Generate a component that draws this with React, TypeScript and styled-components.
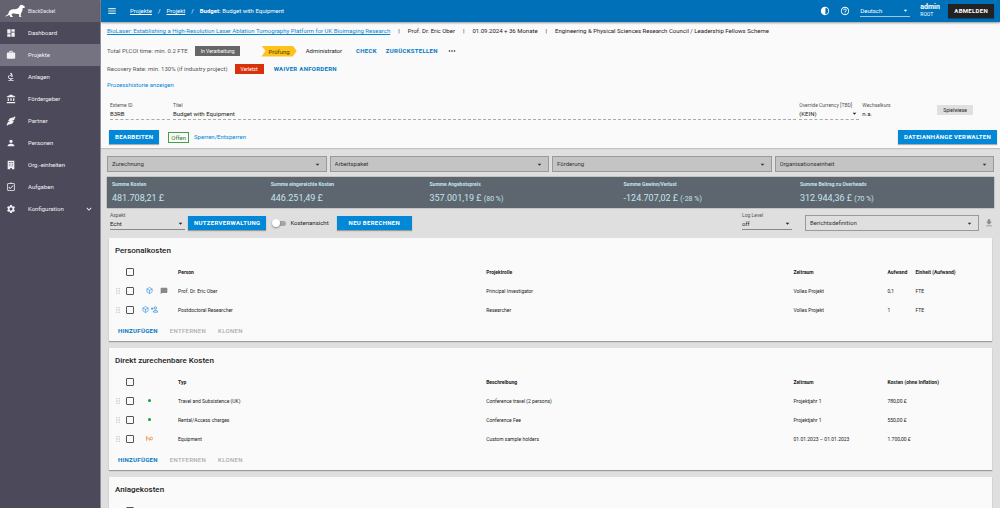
import React from "react";
import styled, { createGlobalStyle } from "styled-components";
import {
  MdDashboard, MdWork, MdBiotech, MdAccountBalance, MdPerson, MdSettings,
  MdReorder, MdContrast, MdHelpOutline, MdMoreHoriz, MdArrowDropDown, MdKeyboardArrowDown,
  MdChatBubble, MdDownload, MdOutlineAssignmentTurnedIn,
} from "react-icons/md";
import { LuBox } from "react-icons/lu";

const blue = "#0288d7";

const Global = createGlobalStyle`
  *, *::before, *::after { box-sizing: border-box; }
  body { margin: 0; font-family: Roboto, "Liberation Sans", sans-serif; font-size: 6px; line-height: 10px; color: #222; background: #dfdfdf; }
  button, input, select { font: inherit; color: inherit; margin: 0; }
  a { color: ${blue}; text-decoration: none; }
  svg { display: block; flex: none; }
`;

const Shell = styled.div`display: flex; height: 100vh; overflow: hidden;`;

const Sidebar = styled.aside`flex: none; width: 101px; background: #4c495a; color: #eeedf1; border-right: 1px solid #8f8c99;`;
const Brand = styled.div`
  display: flex; align-items: center; gap: 2px; height: 22px; padding-left: 4px;
  background: #64626f; font-size: 5px;
`;
const NavItem = styled.a<{ $active?: boolean }>`
  display: flex; align-items: center; height: 22px; padding: 0 6px; color: #f1f0f4;
  background: ${(p) => (p.$active ? "#757281" : "transparent")};
  svg { width: 10px; height: 10px; }
  span { flex: 1; padding-left: 12px; }
`;

const Main = styled.main`flex: 1; min-width: 0; display: flex; flex-direction: column;`;
const TopBar = styled.header`
  position: relative; display: flex; align-items: center; flex: none; height: 22px; padding: 0 6px;
  background: #0070b9; color: #fff; box-shadow: 0 1px 2px rgba(0, 0, 0, 0.4);
`;
const IconButton = styled.button<{ $color?: string }>`
  display: flex; align-items: center; justify-content: center; padding: 0; border: 0; background: none;
  color: ${(p) => p.$color ?? "inherit"};
  svg { width: 10px; height: 10px; }
`;
const Crumbs = styled.nav`
  display: flex; gap: 6px; flex: 1; margin-left: 13px;
  a { color: #fff; text-decoration: underline; }
`;
const TopActions = styled.div`display: flex; align-items: center; gap: 10px;`;
const User = styled.div`font-size: 5px; line-height: 7px; width: 18px; strong { display: block; font-size: 7px; }`;
const Language = styled.div`width: 50px; height: 12px; padding-top: 1px; border-bottom: 1px solid #9cc8e6;`;

const Button = styled.button<{ $dark?: boolean; $wide?: boolean }>`
  height: 14px; padding: 0 ${(p) => (p.$wide ? 12 : 6)}px; border: 0; white-space: nowrap; flex: none;
  background: ${(p) => (p.$dark ? "#222" : blue)};
  color: #fff; font-size: 6px; font-weight: 700; letter-spacing: 0.05em; text-transform: uppercase;
  box-shadow: 0 1px 1px rgba(0, 0, 0, 0.3);
`;
const TextButton = styled.button`
  padding: 0; border: 0; background: none; color: #0078c4; font-size: 6px; font-weight: 700;
  letter-spacing: 0.05em; text-transform: uppercase; white-space: nowrap;
  &:disabled { color: #aaa; font-weight: 500; }
`;

const Scroll = styled.div`flex: 1; min-height: 0; overflow: auto; scrollbar-width: none;`;
const Info = styled.section`background: #fafafa; padding: 4px 3px 4px 6px; box-shadow: 0 1px 1px rgba(0, 0, 0, 0.12);`;
const ProjectLine = styled.div`
  display: flex; gap: 8px; height: 16px; white-space: nowrap;
  a { text-decoration: underline; }
`;
const StatusLine = styled.div`display: flex; align-items: center; height: 18px; color: #555;`;
const Chip = styled.span<{ $bg: string }>`
  margin: 0 10px 0 7px; padding: 0 6px; height: 10px; color: #fff; background: ${(p) => p.$bg}; font-size: 5px; line-height: 10px;
`;
const Stage = styled.span`
  margin-left: 11px; padding: 0 7px; height: 11px; line-height: 11px; color: #4d3a00; background: #ffc21a;
  clip-path: polygon(0 0, calc(100% - 4px) 0, 100% 50%, calc(100% - 4px) 100%, 0 100%, 4px 50%);
`;
const Actor = styled.span`margin: 0 14px 0 9px; color: #222;`;
const StatusActions = styled.div`display: flex; align-items: center; gap: 9px; color: #222;`;
const History = styled.div`height: 16px; padding-top: 2px;`;

const Fields = styled.div`display: flex; gap: 3px; padding: 7px 3px 0; height: 26px;`;
const FieldBox = styled.div<{ $width?: string; $line?: string }>`
  flex: ${(p) => (p.$width ? `0 0 ${p.$width}` : "1 1 0")}; min-width: 0;
  height: 19px; border-bottom: 1px ${(p) => p.$line ?? "dashed #aaa"};
  label, small { display: block; font-size: 5px; line-height: 8px; color: #555; white-space: nowrap; }
  input { display: block; width: 100%; height: 9px; padding: 0; border: 0; background: none; outline: 0; }
`;
const SelectWrap = styled.div`
  display: grid; align-items: center; grid-template-columns: 1fr 9px;
  select { grid-area: 1 / 1 / 2 / 3; appearance: none; width: 100%; height: 9px; padding: 0; border: 0; background: none; outline: 0; }
  select option { color: #222; }
  svg { grid-area: 1 / 2; width: 9px; height: 9px; pointer-events: none; }
`;
const Playground = styled.span`
  align-self: flex-start; margin: 4px 21px 0 auto; padding: 0 6px; height: 10px; background: #e0e0e0; font-size: 5px;
`;
const ActionRow = styled.div`display: flex; align-items: center; justify-content: space-between; height: 14px; margin-top: 10px; padding-left: 2px;`;
const ActionGroup = styled.div`display: flex; align-items: center;`;
const OpenTag = styled.span`margin: 0 5px 0 9px; padding: 0 2px; border: 1px solid #43a047; color: #2e7d32; line-height: 9px;`;

const Board = styled.section`padding: 8px 6px;`;
const Filters = styled.div`display: grid; grid-template-columns: repeat(4, 1fr); gap: 3px;`;
const BoxSelect = styled(SelectWrap)<{ $fill?: string }>`
  height: 16px; padding: 0 4px; border: 1px solid #999; background: ${(p) => p.$fill ?? "#c4c4c4"}; color: #333;
  select { height: 14px; }
`;
const Summary = styled.dl`
  display: grid; grid-template-columns: 18% 18% 22% 20% 1fr; margin: 5px 0 0; padding: 2px 0 3px 5px; height: 31px;
  background: #5d666e; color: #c4e4ef; box-shadow: 0 0 1px #444;
  dt { font-size: 5px; font-weight: 700; line-height: 10px; }
  dd { margin: 0; font-size: 9px; line-height: 18px; font-weight: 400; white-space: nowrap; }
  small { font-size: 7px; }
`;
const Toolbar = styled.div`display: flex; align-items: center; gap: 3px; height: 30px; padding-left: 3px;`;
const ToolField = styled(FieldBox)`align-self: flex-start; margin-top: 3px;`;
const Switch = styled.label`
  display: flex; align-items: center; gap: 4px; margin: 0 5px 0 3px;
  input {
    appearance: none; width: 14px; height: 5px; border-radius: 3px; background: #a5a5a5; display: flex; align-items: center;
  }
  input::before { content: ""; width: 8px; height: 8px; flex: none; border-radius: 50%; background: #fff; box-shadow: 0 1px 2px rgba(0, 0, 0, 0.4); }
  input:checked::before { margin-left: 6px; }
`;
const Spacer = styled.div`flex: 1;`;
const Report = styled(BoxSelect)`width: 174px; margin: 0 2px 0 10px;`;

const Card = styled.section`
  margin: 0 2px 7px; background: #fafafa; box-shadow: 0 1px 1px rgba(0, 0, 0, 0.3);
  h2 { margin: 0; height: 24px; padding-left: 6px; font-size: 8px; line-height: 26px; font-weight: 500; }
`;
const Table = styled.table`
  width: 100%; table-layout: fixed; border-collapse: collapse; font-size: 5px;
  tr { height: 19px; }
  th, td { padding: 0; text-align: left; white-space: nowrap; font-weight: 400; }
  th { font-weight: 700; }
  input { display: block; appearance: none; width: 8px; height: 8px; margin: 0; border: 1px solid #555; border-radius: 1px; }
`;
const Col = styled.col<{ $w?: string }>`width: ${(p) => p.$w ?? "auto"};`;
const Handle = styled.span`display: block; padding-left: 7px; color: #bbb; svg { width: 4px; height: 6px; }`;
const Marks = styled.span<{ $offset?: boolean }>`
  display: flex; align-items: center; gap: 2px; padding-left: ${(p) => (p.$offset ? "8px" : "4px")}; color: #1e88e5;
  svg { width: 7px; height: 7px; }
`;
const Note = styled.span`margin-left: 5px; color: #888; svg { width: 8px; height: 8px; }`;
const Dot = styled.i`width: 3px; height: 3px; margin-left: 2px; border-radius: 50%; background: #14a02c;`;
const Orange = styled.span`color: #f58220;`;
const CardActions = styled.div`display: flex; align-items: center; gap: 12px; height: 22px; padding: 1px 0 0 9px;`;

const DogLogo = () => (
  <svg width="22" height="14" viewBox="0 0 66 42" fill="#fff" aria-hidden="true">
    <path d="M2 36 C8 36 12 31 14 26 C15 19 22 17 28 16 C34 15 40 15 44 11 C46 7 47 3 52 2 L57 4 L63 8 C63 11 60 12 56 12 C56 18 54 24 51 28 L50 36 L53 39 L46 39 L45 30 C38 31 32 29 27 28 L22 32 L25 36 L27 39 L19 39 L16 32 C12 35 7 38 2 36Z" />
  </svg>
);
const PartnerIcon = () => (
  <svg viewBox="0 0 24 24" fill="none" stroke="currentColor" strokeLinecap="round" aria-hidden="true">
    <path strokeWidth="7" d="M11 9 L17 7 M7 17 L13 15" />
    <path strokeWidth="3" d="M3 21 L7 17 M17 7 L21 3 M7 11 L9 10 M15 15 L17 13" />
  </svg>
);
const BuildingIcon = () => (
  <svg viewBox="0 0 24 24" fill="currentColor" aria-hidden="true">
    <path fillRule="evenodd" d="M4 2h16v20h-6v-3h-4v3H4zM7 5v2h2V5zm4 0v2h2V5zm4 0v2h2V5zM7 9v2h2V9zm4 0v2h2V9zm4 0v2h2V9zM7 13v2h2v-2zm4 0v2h2v-2zm4 0v2h2v-2z" />
  </svg>
);
const GripIcon = () => (
  <svg viewBox="0 0 10 14" fill="currentColor" aria-hidden="true">
    {[0, 4, 8].map((x) => [0, 4, 8, 12].map((y) => <rect key={`${x}-${y}`} x={x} y={y} width="2" height="2" />))}
  </svg>
);
const PersonPlusIcon = () => (
  <svg viewBox="0 0 24 24" fill="none" stroke="currentColor" strokeWidth="2.5" aria-hidden="true">
    <path d="M0 9h8M4 5v8" /><circle cx="15" cy="7" r="4" /><path d="M8 21v-2c0-3 4-4 7-4s8 1 8 4v2z" />
  </svg>
);
const LinkedIcon = () => (
  <svg viewBox="0 0 24 24" fill="none" stroke="currentColor" strokeWidth="2.5" aria-hidden="true">
    <path d="M2 3v17M2 13c1-5 8-5 8 0v2c0 4 4 4 4 0v-2" /><circle cx="18" cy="12" r="4.5" />
  </svg>
);

const PlainSelect = ({ id, value, label }: { id: string; value: string; label?: string }) => (
  <SelectWrap>
    <select id={id} aria-label={label}><option>{value}</option></select>
    <MdArrowDropDown />
  </SelectWrap>
);

const nav: { text: string; icon: React.ReactNode }[] = [
  { text: "Dashboard", icon: <MdDashboard /> },
  { text: "Projekte", icon: <MdWork /> },
  { text: "Anlagen", icon: <MdBiotech /> },
  { text: "Fördergeber", icon: <MdAccountBalance /> },
  { text: "Partner", icon: <PartnerIcon /> },
  { text: "Personen", icon: <MdPerson /> },
  { text: "Org.-einheiten", icon: <BuildingIcon /> },
  { text: "Aufgaben", icon: <MdOutlineAssignmentTurnedIn /> },
  { text: "Konfiguration", icon: <MdSettings /> },
];
const filters = ["Zurechnung", "Arbeitspaket", "Förderung", "Organisationseinheit"];
const sums = [
  ["Summe Kosten", "481.708,21 £", ""],
  ["Summe eingereichte Kosten", "446.251,49 £", ""],
  ["Summe Angebotspreis", "357.001,19 £", "(80 %)"],
  ["Summe Gewinn/Verlust", "-124.707,02 £", "(-28 %)"],
  ["Summe Beitrag zu Overheads", "312.944,36 £", "(70 %)"],
];

type Row = { marks: React.ReactNode; cells: string[] };
const CostCard = ({ title, heads, rows }: { title: string; heads: string[]; rows: Row[] }) => (
  <Card>
    <h2>{title}</h2>
    <Table>
      <colgroup>
        <Col $w="17px" /><Col $w="12px" /><Col $w="40px" />
        <Col $w="34.9%" /><Col $w="34.8%" /><Col $w="94px" />
        {heads.length > 4 && <Col $w="28px" />}
        <Col />
      </colgroup>
      <thead>
        <tr>
          <th /><th><input type="checkbox" aria-label={`${title}: alle`} /></th><th />
          {heads.map((h) => <th key={h}>{h}</th>)}
        </tr>
      </thead>
      <tbody>
        {rows.map((r) => (
          <tr key={r.cells[0]}>
            <td><Handle><GripIcon /></Handle></td>
            <td><input type="checkbox" aria-label={r.cells[0]} /></td>
            <td>{r.marks}</td>
            {r.cells.map((c, i) => <td key={i}>{c}</td>)}
          </tr>
        ))}
      </tbody>
    </Table>
    {rows.length > 0 && (
      <CardActions>
        <TextButton>Hinzufügen</TextButton>
        <TextButton disabled>Entfernen</TextButton>
        <TextButton disabled>Klonen</TextButton>
      </CardActions>
    )}
  </Card>
);

export default function App() {
  return (
    <Shell>
      <Global />
      <Sidebar>
        <Brand><DogLogo />BlackDackel</Brand>
        <nav>
          {nav.map((n) => (
            <NavItem key={n.text} href="#" $active={n.text === "Projekte"}>
              {n.icon}<span>{n.text}</span>
              {n.text === "Konfiguration" && <MdKeyboardArrowDown />}
            </NavItem>
          ))}
        </nav>
      </Sidebar>
      <Main>
        <TopBar>
          <IconButton aria-label="Menü" $color="#cfe3f2"><MdReorder /></IconButton>
          <Crumbs>
            <a href="#">Projekte</a><span>/</span><a href="#">Projekt</a><span>/</span>
            <span><b>Budget:</b> Budget with Equipment</span>
          </Crumbs>
          <TopActions>
            <IconButton aria-label="Kontrast"><MdContrast /></IconButton>
            <IconButton aria-label="Hilfe"><MdHelpOutline /></IconButton>
            <Language><PlainSelect id="lang" label="Sprache" value="Deutsch" /></Language>
            <User><strong>admin</strong>ROOT</User>
            <Button $dark>Abmelden</Button>
          </TopActions>
        </TopBar>
        <Scroll>
          <Info>
            <ProjectLine>
              <a href="#">BioLaser: Establishing a High-Resolution Laser Ablation Tomography Platform for UK Bioimaging Research</a>
              <span>|</span><span>Prof. Dr. Eric Ober</span><span>|</span><span>01.09.2024 + 36 Monate</span><span>|</span>
              <span>Engineering &amp; Physical Sciences Research Council / Leadership Fellows Scheme</span>
            </ProjectLine>
            <StatusLine>
              Total PI,COI time: min. 0.2 FTE<Chip $bg="#666">In Verarbeitung</Chip>
              <Stage>Prüfung</Stage><Actor>Administrator</Actor>
              <StatusActions>
                <TextButton>Check</TextButton><TextButton>Zurückstellen</TextButton>
                <IconButton aria-label="Mehr"><MdMoreHoriz /></IconButton>
              </StatusActions>
            </StatusLine>
            <StatusLine>
              Recovery Rate: min. 130% (if industry project)<Chip $bg="#d7320c">Verletzt</Chip>
              <StatusActions><TextButton>Waiver anfordern</TextButton></StatusActions>
            </StatusLine>
            <History><a href="#">Prozesshistorie anzeigen</a></History>
            <Fields>
              <FieldBox $width="60px"><label htmlFor="ext">Externe ID</label><input id="ext" defaultValue="B3RB" /></FieldBox>
              <FieldBox><label htmlFor="titel">Titel</label><input id="titel" defaultValue="Budget with Equipment" /></FieldBox>
              <FieldBox $width="60px"><label htmlFor="cur">Override Currency [TBD]</label><PlainSelect id="cur" value="(KEIN)" /></FieldBox>
              <FieldBox $width="72px" $line="solid transparent"><small>Wechselkurs</small>n.a.</FieldBox>
              <Playground>Spielwiese</Playground>
            </Fields>
            <ActionRow>
              <ActionGroup>
                <Button>Bearbeiten</Button><OpenTag>Offen</OpenTag><a href="#">Sperren/Entsperren</a>
              </ActionGroup>
              <Button>Dateianhänge verwalten</Button>
            </ActionRow>
          </Info>
          <Board>
            <Filters>
              {filters.map((f) => (
                <BoxSelect key={f}>
                  <select aria-label={f}><option>{f}</option></select><MdArrowDropDown />
                </BoxSelect>
              ))}
            </Filters>
            <Summary>
              {sums.map(([l, v, p]) => <div key={l}><dt>{l}</dt><dd>{v} {p && <small>{p}</small>}</dd></div>)}
            </Summary>
            <Toolbar>
              <ToolField $width="75px" $line="solid #888"><label htmlFor="aspekt">Aspekt</label><PlainSelect id="aspekt" value="Echt" /></ToolField>
              <Button>Nutzerverwaltung</Button>
              <Switch><input type="checkbox" role="switch" />Kostenansicht</Switch>
              <Button $wide>Neu berechnen</Button>
              <Spacer />
              <ToolField $width="50px" $line="solid #888"><label htmlFor="log">Log Level</label><PlainSelect id="log" value="off" /></ToolField>
              <Report $fill="transparent">
                <select aria-label="Berichtsdefinition"><option>Berichtsdefinition</option></select><MdArrowDropDown />
              </Report>
              <IconButton aria-label="Herunterladen" $color="#8a8a8a"><MdDownload /></IconButton>
            </Toolbar>
            <CostCard
              title="Personalkosten"
              heads={["Person", "Projektrolle", "Zeitraum", "Aufwand", "Einheit (Aufwand)"]}
              rows={[
                { marks: <Marks $offset><LuBox /><Note><MdChatBubble /></Note></Marks>, cells: ["Prof. Dr. Eric Ober", "Principal Investigator", "Volles Projekt", "0,1", "FTE"] },
                { marks: <Marks><LuBox /><PersonPlusIcon /></Marks>, cells: ["Postdoctoral Researcher", "Researcher", "Volles Projekt", "1", "FTE"] },
              ]}
            />
            <CostCard
              title="Direkt zurechenbare Kosten"
              heads={["Typ", "Beschreibung", "Zeitraum", "Kosten (ohne Inflation)"]}
              rows={[
                { marks: <Marks $offset><Dot /></Marks>, cells: ["Travel and Subsistence (UK)", "Conference travel (2 persons)", "Projektjahr 1", "780,00 £"] },
                { marks: <Marks $offset><Dot /></Marks>, cells: ["Rental/Access charges", "Conference Fee", "Projektjahr 1", "550,00 £"] },
                { marks: <Marks $offset><Orange><LinkedIcon /></Orange></Marks>, cells: ["Equipment", "Custom sample holders", "01.01.2023 – 01.01.2023", "1.700,00 £"] },
              ]}
            />
            <CostCard title="Anlagekosten" heads={[]} rows={[]} />
          </Board>
        </Scroll>
      </Main>
    </Shell>
  );
}
